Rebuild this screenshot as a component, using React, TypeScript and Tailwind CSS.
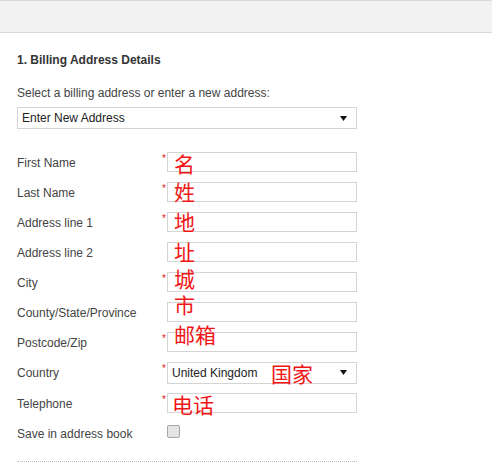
import React from "react";

type Row = {
  label: string;
  required?: boolean;
  note?: string;
  noteTop?: number;
  noteLeft?: number;
  kind?: "input" | "select" | "checkbox";
  value?: string;
};

const rows: Row[] = [
  { label: "First Name", required: true, note: "名", noteTop: 0 },
  { label: "Last Name", required: true, note: "姓", noteTop: -2 },
  { label: "Address line 1", required: true, note: "地", noteTop: -2 },
  { label: "Address line 2", note: "址", noteTop: -2 },
  { label: "City", required: true, note: "城", noteTop: -5 },
  { label: "County/State/Province", note: "市", noteTop: -9 },
  { label: "Postcode/Zip", required: true, note: "邮箱", noteTop: -9 },
  { label: "Country", required: true, note: "国家", noteTop: 0, noteLeft: 103, kind: "select", value: "United Kingdom" },
  { label: "Telephone", required: true, note: "电话", noteTop: 0, noteLeft: 4 },
  { label: "Save in address book", kind: "checkbox" },
];

function Arrow() {
  return (
    <svg width="7" height="5" viewBox="0 0 7 5" className="block">
      <path d="M0 0 H7 L3.5 5 Z" fill="#111" />
    </svg>
  );
}

function Note({ text, top, left }: { text: string; top: number; left: number }) {
  return (
    <span
      className="absolute whitespace-nowrap text-[21px] leading-[20px] text-[#f01616] font-['Noto_Sans_CJK_SC',sans-serif] pointer-events-none"
      style={{ top, left }}
    >
      {text}
    </span>
  );
}

export default function App() {
  return (
    <div className="w-[492px] h-[463px] bg-white overflow-hidden font-['Liberation_Sans',Arial,sans-serif]">
      <div className="h-[33px] bg-[#f2f2f2] border-y border-[#dadada]" />
      <div className="pl-[17px] pt-[19px]">
        <h2 className="text-[12px] leading-[16px] font-bold text-[#333]">1. Billing Address Details</h2>
        <p className="mt-[17px] text-[12px] leading-[16px] text-[#444]">
          Select a billing address or enter a new address:
        </p>
        <div className="mt-[6px] w-[340px] h-[22px] border border-[#d4d4d4] flex items-center justify-between pl-[4px] pr-[9px] text-[12px] text-[#222]">
          <span>Enter New Address</span>
          <Arrow />
        </div>
        <div className="mt-[18px] w-[340px]">
          {rows.map((r, i) => (
            <div key={i} className={`flex items-center ${r.kind === "select" ? "h-[31px]" : "h-[30px]"}`}>
              <div className="w-[150px] pt-[1px] text-[12px] leading-[16px] text-[#444]">{r.label}</div>
              {r.kind === "checkbox" ? (
                <div className="w-[13px] h-[13px] rounded-[2px] border border-[#a6a6a6] bg-[#e4e4e4] -mt-[3px]" />
              ) : (
                <div
                  className={`relative w-[190px] border border-[#d4d4d4] bg-white ${
                    r.kind === "select" ? "h-[22px]" : "h-[20px]"
                  }`}
                >
                  {r.required && (
                    <span className="absolute -left-[6px] top-[1px] text-[10px] leading-[10px] text-[#d22]">*</span>
                  )}
                  {r.kind === "select" && (
                    <div className="absolute inset-0 flex items-center justify-between pl-[4px] pr-[9px] text-[12px] text-[#222]">
                      <span>{r.value}</span>
                      <Arrow />
                    </div>
                  )}
                  {r.note && <Note text={r.note} top={r.noteTop ?? 0} left={r.noteLeft ?? 6} />}
                </div>
              )}
            </div>
          ))}
        </div>
        <div className="mt-[13px] w-[340px] border-t border-dotted border-[#bbb]" />
      </div>
    </div>
  );
}
